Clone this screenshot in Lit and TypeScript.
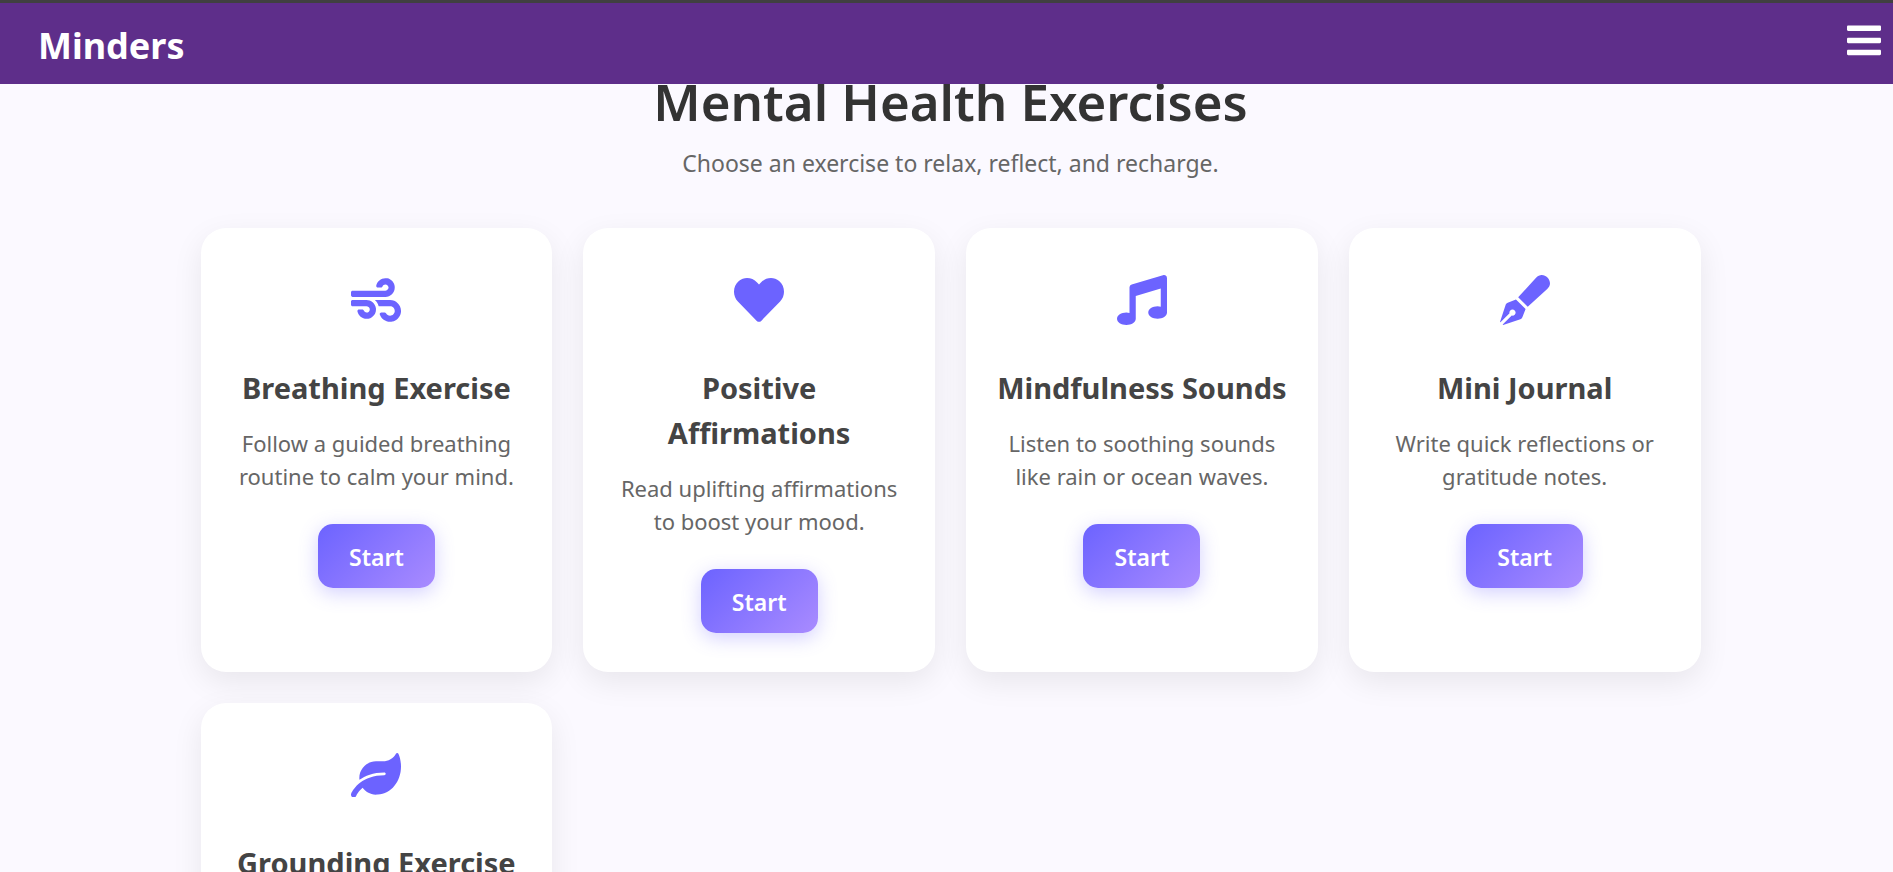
import { LitElement, html, css, svg } from 'lit';
import { customElement, property } from 'lit/decorators.js';

const ICONS: Record<string, { box: string; path: string }> = {
  bars: {
    box: '0 0 448 512',
    path: 'M16 132h416c8.837 0 16-7.163 16-16V76c0-8.837-7.163-16-16-16H16C7.163 60 0 67.163 0 76v40c0 8.837 7.163 16 16 16zm0 160h416c8.837 0 16-7.163 16-16v-40c0-8.837-7.163-16-16-16H16c-8.837 0-16 7.163-16 16v40c0 8.837 7.163 16 16 16zm0 160h416c8.837 0 16-7.163 16-16v-40c0-8.837-7.163-16-16-16H16c-8.837 0-16 7.163-16 16v40c0 8.837 7.163 16 16 16z',
  },
  wind: {
    box: '0 0 512 512',
    path: 'M156.7 256H16c-8.8 0-16 7.2-16 16v32c0 8.8 7.2 16 16 16h142.2c15.9 0 30.8 10.9 33.4 26.6 3.3 20-12.1 37.4-31.6 37.4-14.1 0-26.1-9.2-30.4-21.9-2.1-6.3-8.6-10.1-15.2-10.1H81.6c-9.8 0-17.7 8.8-15.9 18.4 8.6 44.1 47.6 77.6 94.2 77.6 57.1 0 102.7-50.1 95.2-108.6C249 291 205.4 256 156.7 256zM16 224h336c59.7 0 106.8-54.8 93.8-116.7-7.6-36.2-36.9-65.5-73.1-73.1-55.4-11.6-105.1 24.9-114.4 75.5-1.9 9.6 6.1 18.3 15.8 18.3h32.8c6.7 0 13.1-3.8 15.2-10.1C326.3 105.2 338.3 96 352.4 96c19.4 0 34.9 17.4 31.6 37.4-2.6 15.7-17.4 26.6-33.4 26.6H16c-8.8 0-16 7.2-16 16v32c0 8.8 7.2 16 16 16zm384 32H243.7c19.3 16.6 33.2 38.8 39.8 64H400c26.5 0 48 21.5 48 48s-21.5 48-48 48c-17.9 0-33.3-9.9-41.6-24.4-2.9-5-8.7-7.6-14.5-7.6h-33.8c-10.9 0-19 10.8-15.3 21.1 17.8 50.6 70.5 84.8 129.4 72.3 41.2-8.7 75.1-41.6 84.7-82.7C526 321.5 470.5 256 400 256z',
  },
  heart: {
    box: '0 0 512 512',
    path: 'M462.3 62.6C407.5 15.9 326 24.3 275.7 76.2L256 96.5l-19.7-20.3C186.1 24.3 104.5 15.9 49.7 62.6c-62.8 53.6-66.1 149.8-9.9 207.9l193.5 199.8c12.5 12.9 32.8 12.9 45.3 0l193.5-199.8c56.3-58.1 53-154.3-9.8-207.9z',
  },
  music: {
    box: '0 0 512 512',
    path: 'M470.38 1.51L150.41 96A32 32 0 0 0 128 126.51v261.41A139 139 0 0 0 96 384c-53 0-96 28.66-96 64s43 64 96 64 96-28.66 96-64V214.32l256-75v184.61a138.4 138.4 0 0 0-32-3.93c-53 0-96 28.66-96 64s43 64 96 64 96-28.65 96-64V32a32 32 0 0 0-41.62-30.49z',
  },
  pen: {
    box: '0 0 512 512',
    path: 'M79.18 282.94a32.005 32.005 0 0 0-20.24 20.24L0 480l4.69 4.69 92.89-92.89c-.66-2.56-1.57-5.03-1.57-7.8 0-17.67 14.33-32 32-32s32 14.33 32 32-14.33 32-32 32c-2.77 0-5.24-.91-7.8-1.57l-92.89 92.89L32 512l176.82-58.94a31.983 31.983 0 0 0 20.24-20.24l33.07-84.07-98.88-98.88-84.07 33.07zM369.25 28.32L186.14 227.81l97.85 97.85 199.49-183.11C568.4 67.48 443.73-55.94 369.25 28.32z',
  },
  leaf: {
    box: '0 0 576 512',
    path: 'M546.2 9.7c-5.6-12.5-21.6-13-28.3-1.2C486.9 62.4 431.4 96 368 96h-80C182 96 96 182 96 288c0 7 .8 13.7 1.5 20.5C161.3 262.8 253.4 224 384 224c8.8 0 16 7.2 16 16s-7.2 16-16 16C132.6 256 26 410.1 2.4 468c-6.6 16.3 1.2 34.9 17.5 41.6 16.4 6.8 35-1.1 41.8-17.3 1.5-3.6 20.9-47.9 71.9-90.6 32.4 43.9 94 85.8 174.9 77.2C465.5 467.5 576 326.7 576 154.3c0-50.2-10.8-102.2-29.8-144.6z',
  },
};

const icon = (name: string) => html`
  <svg viewBox=${ICONS[name].box} fill="currentColor" aria-hidden="true">
    ${svg`<path d=${ICONS[name].path}></path>`}
  </svg>
`;

const EXERCISES = [
  { icon: 'wind', title: 'Breathing Exercise', text: 'Follow a guided breathing routine to calm your mind.' },
  { icon: 'heart', title: 'Positive Affirmations', text: 'Read uplifting affirmations to boost your mood.' },
  { icon: 'music', title: 'Mindfulness Sounds', text: 'Listen to soothing sounds like rain or ocean waves.' },
  { icon: 'pen', title: 'Mini Journal', text: 'Write quick reflections or gratitude notes.' },
  { icon: 'leaf', title: 'Grounding Exercise', text: 'Use your senses to return to the present.' },
];

@customElement('exercise-card')
export class ExerciseCard extends LitElement {
  @property() icon = 'wind';
  @property() heading = '';
  @property() text = '';

  static styles = css`
    :host {
      display: block;
      box-sizing: border-box;
      padding: 38px 31px 39px;
      border-radius: 25px;
      background: #fff;
      box-shadow: 0 10px 31px rgba(0, 0, 0, 0.08);
      text-align: center;
    }
    .icon {
      display: flex;
      align-items: center;
      justify-content: center;
      height: 68px;
      margin-bottom: 31px;
      color: #6c63ff;
    }
    .icon svg {
      width: 50px;
    }
    .title {
      margin: 0 0 17px;
      font-size: 29px;
      line-height: 45px;
      font-weight: 700;
      color: #444;
    }
    .text {
      margin: 0 0 31px;
      font-size: 22px;
      line-height: 33px;
      color: #666;
    }
    .start {
      display: block;
      margin: 0 auto;
      padding: 17px 31px 15px;
      border: 0;
      border-radius: 15px;
      background: linear-gradient(135deg, #6c63ff, #a98bff);
      box-shadow: 0 5px 19px rgba(108, 99, 255, 0.3);
      color: #fff;
      font: inherit;
      font-size: 23px;
      line-height: 32px;
      font-weight: 600;
      cursor: pointer;
    }
  `;

  render() {
    return html`
      <div class="icon">${icon(this.icon)}</div>
      <h3 class="title">${this.heading}</h3>
      <p class="text">${this.text}</p>
      <button class="start" type="button">Start</button>
    `;
  }
}

@customElement('app-root')
export class AppRoot extends LitElement {
  static styles = css`
    :host {
      display: block;
      height: 100vh;
      overflow-y: auto;
      scrollbar-width: none;
      background: #fbf9ff;
      font-family: 'Noto Sans', 'Open Sans', sans-serif;
    }
    .bar {
      position: fixed;
      inset: 0 0 auto;
      z-index: 10;
      display: flex;
      align-items: flex-start;
      justify-content: space-between;
      padding: 18px 12px 13px 38px;
      border-top: 3px solid #404040;
      background: #5e2e8a;
      color: #fff;
    }
    .brand {
      color: inherit;
      font-size: 36px;
      line-height: 50px;
      font-weight: 700;
      text-decoration: none;
    }
    .menu {
      display: flex;
      padding: 0;
      border: 0;
      background: none;
      color: inherit;
      cursor: pointer;
    }
    .menu svg {
      width: 34px;
    }
    .page {
      padding: 71px 24px 48px 32px;
    }
    .intro {
      margin-bottom: 46px;
      text-align: center;
    }
    .heading {
      margin: 0 0 13px;
      font-size: 51px;
      line-height: 60px;
      font-weight: 600;
      color: #333;
    }
    .lead {
      margin: 0;
      font-size: 23px;
      line-height: 38px;
      color: #666;
    }
    .cards {
      display: grid;
      grid-template-columns: repeat(auto-fit, minmax(300px, 1fr));
      gap: 31px;
      max-width: 1500px;
      margin: 0 auto;
    }
  `;

  render() {
    return html`
      <header class="bar">
        <a class="brand" href="#">Minders</a>
        <button class="menu" type="button" aria-label="Menu">${icon('bars')}</button>
      </header>
      <main class="page">
        <div class="intro">
          <h1 class="heading">Mental Health Exercises</h1>
          <p class="lead">Choose an exercise to relax, reflect, and recharge.</p>
        </div>
        <div class="cards">
          ${EXERCISES.map(
            (e) => html`<exercise-card .icon=${e.icon} .heading=${e.title} .text=${e.text}></exercise-card>`,
          )}
        </div>
      </main>
    `;
  }
}
